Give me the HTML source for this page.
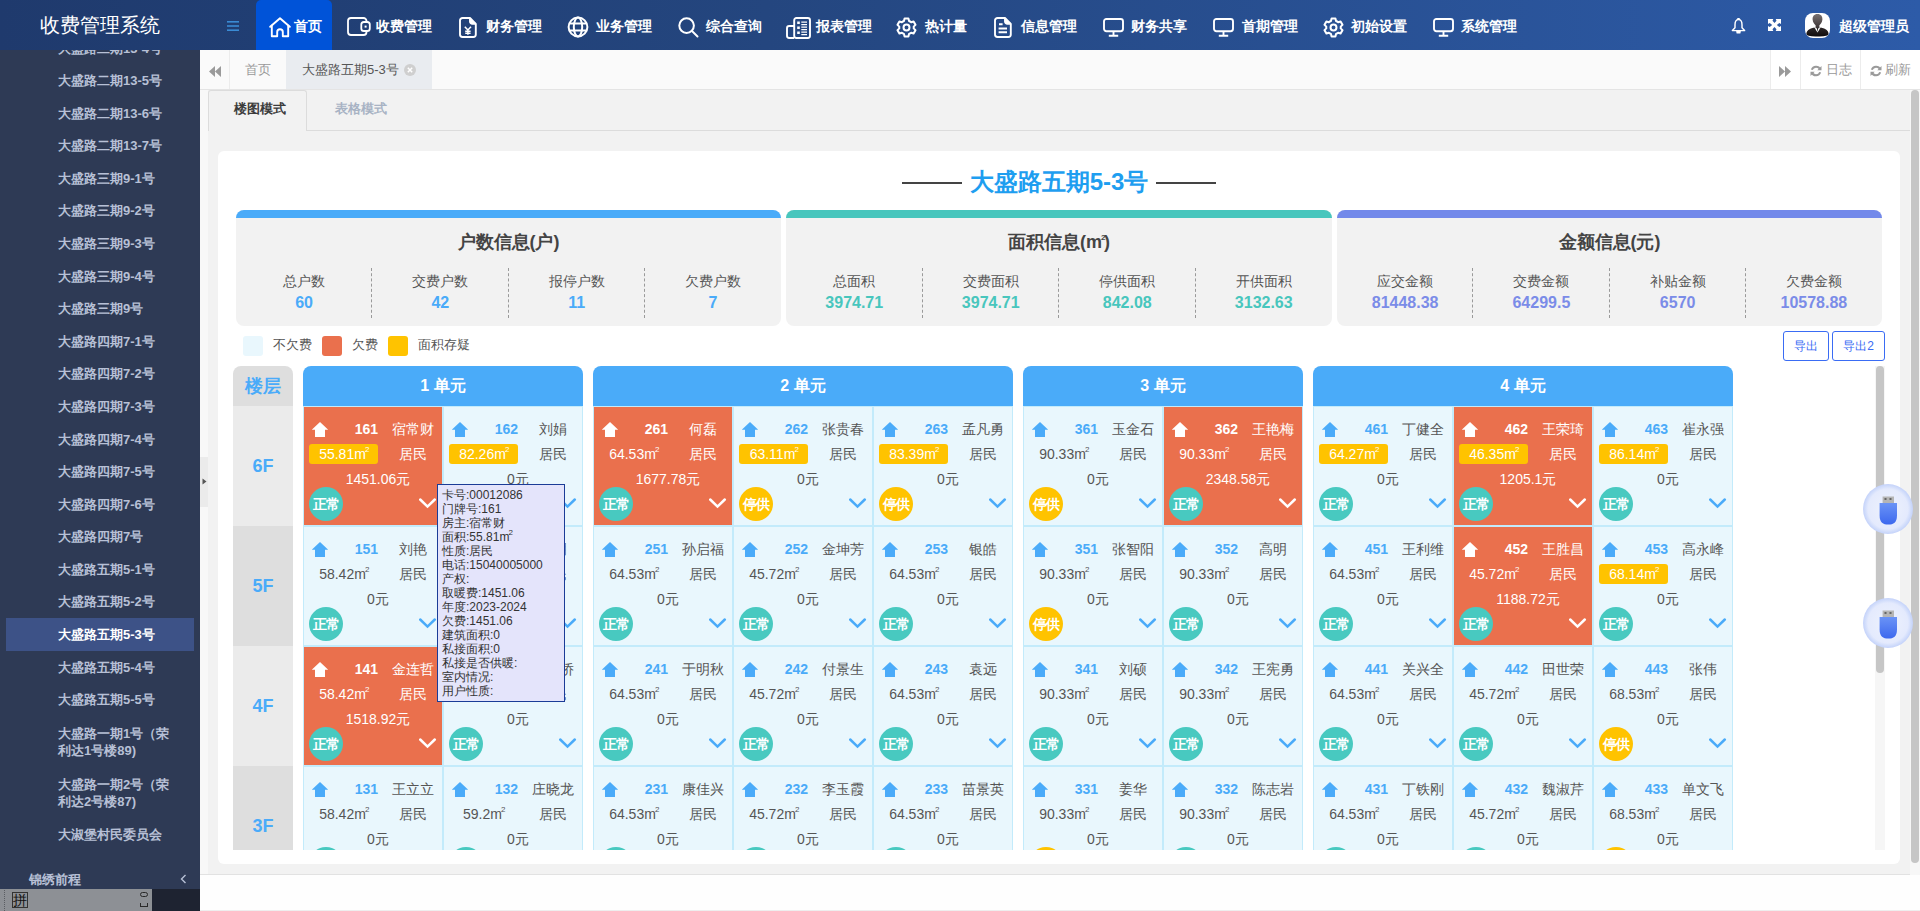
<!DOCTYPE html><html><head><meta charset="utf-8"><style>
*{box-sizing:border-box;margin:0;padding:0}
html,body{width:1920px;height:911px;overflow:hidden;background:#fff}
body{position:relative;font-family:"Liberation Sans",sans-serif;color:#555}
.abs{position:absolute}
.hdr{left:0;top:0;width:1920px;height:50px;background:linear-gradient(90deg,#1f3a6d 0%,#24467f 40%,#2d5ba8 100%)}
.logo{left:0;top:0;width:200px;height:50px;color:#fff;font-size:20px;line-height:50px;text-align:center}
.nav{top:0;height:50px;line-height:52px;color:#fff;font-size:14px;font-weight:bold;white-space:nowrap}
.navbg{left:256px;top:0;width:76px;height:50px;background:#0053d8;border-radius:5px 5px 0 0}
.ico{position:absolute}
.side{left:0;top:50px;width:200px;height:861px;background:#2e3a55;overflow:hidden}
.si{position:absolute;left:58px;font-size:13px;font-weight:bold;color:#b7c0d6;white-space:nowrap;line-height:17px}
.tabbar{left:200px;top:50px;width:1720px;height:40px;background:#fafafa;border-bottom:1px solid #e4e4e4}
.gray{left:200px;top:90px;width:1710px;height:785px;background:#f2f2f2}
.card{left:218px;top:151px;width:1682px;height:713px;background:#fff;border-radius:6px}
.stat{top:210px;height:116px;background:#f2f2f2;border-radius:8px;overflow:hidden}
.stat .bar{position:absolute;left:0;top:0;width:100%;height:8px}
.stat .tt{position:absolute;left:0;top:230px;width:100%;text-align:center;font-size:18px;font-weight:bold;color:#444}
.col{position:absolute;top:0;height:115px;text-align:center}
.col .lb{position:absolute;left:0;width:100%;top:63px;font-size:14px;color:#555;line-height:16px}
.col .vl{position:absolute;left:0;width:100%;top:84px;font-size:16px;font-weight:bold;line-height:18px}
.dash{position:absolute;top:58px;margin-left:-1px;height:50px;width:0;border-left:1px dashed #9a9a9a}
.unit{top:366px;background:#e9f7fd}
.uh{position:absolute;left:0;top:0;width:100%;height:40px;background:#4aabf9;border-radius:8px 8px 0 0;color:#fff;font-size:16px;font-weight:bold;text-align:center;line-height:40px}
.cell{position:absolute;width:140px;height:120px;border:1px solid #c3ebfb;background:#e9f7fd;color:#555;font-size:14px}
.cell.o{background:#ea704d;color:#fff}
.cell .hm{position:absolute;left:8px;top:15px;line-height:0}
.cell .no{position:absolute;left:0;width:74px;text-align:right;top:13.5px;font-weight:bold;color:#4aabf9;line-height:16px}
.cell.o .no{color:#fff}
.cell .nm{position:absolute;left:59px;width:100px;text-align:center;top:14px;line-height:16px;white-space:nowrap}
.cell .ar{position:absolute;left:5px;width:69px;height:20px;top:37px;text-align:center;line-height:20px;white-space:nowrap}
.cell .ar.y{background:#ffc300;border-radius:3px;color:#fff}
.cell .ty{position:absolute;left:59px;width:100px;text-align:center;top:39px;line-height:16px}
.cell .am{position:absolute;left:0;width:148px;text-align:center;top:63.5px;line-height:16px;white-space:nowrap}
.cell .st{position:absolute;left:5px;top:80px;width:34px;height:34px;border-radius:50%;background:#48c9c0;color:#fff;font-weight:bold;font-size:14px;text-align:center;line-height:34px;white-space:nowrap;letter-spacing:-1px}
.cell .st.y{background:#ffc300}
.cell .cv{position:absolute;left:115px;top:89px}
.m2{display:inline-block;position:relative;padding-right:2px;line-height:14px}.m2 i{position:absolute;right:-1.5px;top:-1px;font-style:normal;font-size:8px;line-height:8px}
</style></head><body>
<div class="abs hdr"></div>
<div class="abs logo">收费管理系统</div>
<svg class="abs" style="left:227px;top:20px" width="12" height="12" viewBox="0 0 12 12"><rect x="0" y="1" width="12" height="1.6" fill="#3a8bd5"/><rect x="0" y="5.2" width="12" height="1.6" fill="#3a8bd5"/><rect x="0" y="9.4" width="12" height="1.6" fill="#3a8bd5"/></svg>
<div class="abs navbg"></div>
<div class="abs" style="left:269px;top:17px;line-height:0"><svg width="22" height="21" viewBox="0 0 22 21" fill="none" stroke="#fff" stroke-width="1.9" stroke-linejoin="round" stroke-linecap="round"><path d="M1.2 9.8 L11 1.2 L20.8 9.8"/><path d="M2.8 8.6 V19.2 H8.2 V15 a2.8 2.8 0 0 1 5.6 0 V19.2 H19.2 V8.6"/></svg></div>
<div class="abs nav" style="left:294px">首页</div>
<div class="abs" style="left:347px;top:17px;line-height:0"><svg width="24" height="19" viewBox="0 0 24 19" fill="none" stroke="#fff" stroke-width="1.8"><path d="M19.5 5 V4 a3 3 0 0 0 -3 -3 H4 a3 3 0 0 0 -3 3 V15 a3 3 0 0 0 3 3 H16.5 a3 3 0 0 0 3 -3 V14"/><rect x="14.3" y="5" width="8.5" height="9" rx="2.6"/><rect x="17.6" y="8.6" width="2" height="2" fill="#fff" stroke="none"/></svg></div>
<div class="abs nav" style="left:376px">收费管理</div>
<div class="abs" style="left:459px;top:16.5px;line-height:0"><svg width="18" height="21" viewBox="0 0 18 21" fill="none" stroke="#fff" stroke-width="1.9" stroke-linejoin="round"><path d="M3.5 1 H11 L16.8 6.8 V17.5 a2.5 2.5 0 0 1 -2.5 2.5 H3.5 a2.5 2.5 0 0 1 -2.5 -2.5 V3.5 a2.5 2.5 0 0 1 2.5 -2.5 Z"/><path d="M11 1 V4.5 a2.3 2.3 0 0 0 2.3 2.3 H16.8" fill="#fff"/><path d="M5.8 9.8 L8.9 13 L12 9.8 M8.9 13 V17.8 M6.2 14.2 H11.6 M6.2 16.2 H11.6" stroke-width="1.5"/></svg></div>
<div class="abs nav" style="left:486px">财务管理</div>
<div class="abs" style="left:567px;top:16px;line-height:0"><svg width="22" height="22" viewBox="0 0 22 22" fill="none" stroke="#fff" stroke-width="2"><circle cx="11" cy="11" r="9.4"/><ellipse cx="11" cy="11" rx="4.2" ry="9.4"/><path d="M2 7.6 H20 M2 14.4 H20"/></svg></div>
<div class="abs nav" style="left:596px">业务管理</div>
<div class="abs" style="left:678px;top:17px;line-height:0"><svg width="21" height="21" viewBox="0 0 21 21" fill="none" stroke="#fff" stroke-width="2"><circle cx="8.6" cy="8.6" r="7.3"/><path d="M14 14 L19.5 19.5" stroke-linecap="round"/></svg></div>
<div class="abs nav" style="left:706px">综合查询</div>
<div class="abs" style="left:786px;top:16.5px;line-height:0"><svg width="25" height="22" viewBox="0 0 25 22" fill="none" stroke="#fff" stroke-width="1.9"><rect x="8.2" y="1" width="15.8" height="20" rx="2.2"/><path d="M8.2 9 H3.2 a2.2 2.2 0 0 0 -2.2 2.2 V18.8 a2.2 2.2 0 0 0 2.2 2.2 H8.2"/><path d="M11.2 4.6 h2.6 v2.4 h-2.6 Z M11.2 9.6 h2.6 v2.4 h-2.6 Z M11.2 14.6 h2.6 v2.4 h-2.6 Z" fill="#fff" stroke="none"/><path d="M15.3 5.2 H21 M15.3 7.6 H21 M15.3 10.2 H21 M15.3 12.6 H21 M15.3 15.2 H21 M15.3 17.6 H21" stroke-width="1.2"/></svg></div>
<div class="abs nav" style="left:816px">报表管理</div>
<div class="abs" style="left:896px;top:16.5px;line-height:0"><svg width="21" height="21" viewBox="0 0 24 24" fill="none" stroke="#fff" stroke-width="2.3" stroke-linejoin="round"><path d="M9.8 1.8 H14.2 L14.9 4.6 Q16.2 5.1 17.3 6 L20.1 5.2 L22.3 9 L20.2 11 Q20.4 12 20.2 13 L22.3 15 L20.1 18.8 L17.3 18 Q16.2 18.9 14.9 19.4 L14.2 22.2 H9.8 L9.1 19.4 Q7.8 18.9 6.7 18 L3.9 18.8 L1.7 15 L3.8 13 Q3.6 12 3.8 11 L1.7 9 L3.9 5.2 L6.7 6 Q7.8 5.1 9.1 4.6 Z"/><circle cx="12" cy="12" r="3.4"/></svg></div>
<div class="abs nav" style="left:925px">热计量</div>
<div class="abs" style="left:994px;top:16.5px;line-height:0"><svg width="18" height="21" viewBox="0 0 18 21" fill="none" stroke="#fff" stroke-width="1.9" stroke-linejoin="round"><path d="M3.5 1 H11 L16.8 6.8 V17.5 a2.5 2.5 0 0 1 -2.5 2.5 H3.5 a2.5 2.5 0 0 1 -2.5 -2.5 V3.5 a2.5 2.5 0 0 1 2.5 -2.5 Z"/><path d="M11 1 V4.5 a2.3 2.3 0 0 0 2.3 2.3 H16.8" fill="#fff"/><path d="M5 7.2 H8.6 M4.6 11.4 H13 M4.6 15.2 H13" stroke-width="2"/></svg></div>
<div class="abs nav" style="left:1021px">信息管理</div>
<div class="abs" style="left:1103px;top:18px;line-height:0"><svg width="21" height="19" viewBox="0 0 21 19" fill="none" stroke="#fff" stroke-width="1.9"><rect x="1" y="1" width="19" height="12.2" rx="2.4"/><path d="M10.5 13.2 V17.5 M5.8 17.8 H15.2"/></svg></div>
<div class="abs nav" style="left:1131px">财务共享</div>
<div class="abs" style="left:1213px;top:18px;line-height:0"><svg width="21" height="19" viewBox="0 0 21 19" fill="none" stroke="#fff" stroke-width="1.9"><rect x="1" y="1" width="19" height="12.2" rx="2.4"/><path d="M10.5 13.2 V17.5 M5.8 17.8 H15.2"/></svg></div>
<div class="abs nav" style="left:1242px">首期管理</div>
<div class="abs" style="left:1323px;top:16.5px;line-height:0"><svg width="21" height="21" viewBox="0 0 24 24" fill="none" stroke="#fff" stroke-width="2.3" stroke-linejoin="round"><path d="M9.8 1.8 H14.2 L14.9 4.6 Q16.2 5.1 17.3 6 L20.1 5.2 L22.3 9 L20.2 11 Q20.4 12 20.2 13 L22.3 15 L20.1 18.8 L17.3 18 Q16.2 18.9 14.9 19.4 L14.2 22.2 H9.8 L9.1 19.4 Q7.8 18.9 6.7 18 L3.9 18.8 L1.7 15 L3.8 13 Q3.6 12 3.8 11 L1.7 9 L3.9 5.2 L6.7 6 Q7.8 5.1 9.1 4.6 Z"/><circle cx="12" cy="12" r="3.4"/></svg></div>
<div class="abs nav" style="left:1351px">初始设置</div>
<div class="abs" style="left:1433px;top:18px;line-height:0"><svg width="21" height="19" viewBox="0 0 21 19" fill="none" stroke="#fff" stroke-width="1.9"><rect x="1" y="1" width="19" height="12.2" rx="2.4"/><path d="M10.5 13.2 V17.5 M5.8 17.8 H15.2"/></svg></div>
<div class="abs nav" style="left:1461px">系统管理</div>
<svg class="abs" style="left:1730.5px;top:18px" width="15" height="16" viewBox="0 0 15 16" fill="none" stroke="#fff" stroke-width="1.45" stroke-linejoin="round"><path d="M7.5 1.6 C10.3 1.6 11 4 11 6.8 V9.8 L13.6 12.6 H1.4 L4 9.8 V6.8 C4 4 4.7 1.6 7.5 1.6 Z"/><path d="M6.5 1.2 L7.5 0.3 L8.5 1.2 Z M5.8 12.6 H9.2 L8.8 14.8 H6.2 Z" fill="#fff"/></svg>
<svg class="abs" style="left:1768px;top:19px" width="13" height="12" viewBox="0 0 13 12" fill="#fff"><path d="M0 0 H5.3 L4.5 1.7 L6.5 4.1 L8.5 1.7 L7.7 0 H13 V4.9 L11.3 4.1 L8.8 6 L11.3 7.9 L13 7.1 V12 H7.7 L8.5 10.3 L6.5 7.9 L4.5 10.3 L5.3 12 H0 V7.1 L1.7 7.9 L4.2 6 L1.7 4.1 L0 4.9 Z"/></svg>
<div class="abs" style="left:1805px;top:13px;width:25px;height:25px;border-radius:8px;background:#fff;overflow:hidden"><svg width="25" height="25" viewBox="0 0 25 25"><defs><linearGradient id="av" x1="0" y1="0" x2="0" y2="1"><stop offset="0" stop-color="#7a7272"/><stop offset="1" stop-color="#3a3232"/></linearGradient><linearGradient id="av2" x1="0" y1="0" x2="0" y2="1"><stop offset="0" stop-color="#2e2828"/><stop offset="1" stop-color="#100c0c"/></linearGradient></defs><path d="M12.5 1 C16 1 17.6 3.4 17.4 6.6 C17.2 9.4 15.6 11.4 14.4 12.2 V15.2 H10.6 V12.2 C9.4 11.4 7.8 9.4 7.6 6.6 C7.4 3.4 9 1 12.5 1 Z" fill="url(#av)"/><path d="M1.4 21.6 C1.2 17.6 4 15.6 9.4 14.4 L12.5 19.5 L15.6 14.4 C21 15.6 23.8 17.6 23.6 21.6 Q23.4 23.6 12.5 23.4 Q1.6 23.6 1.4 21.6 Z" fill="url(#av2)"/><path d="M11.8 15 L12.5 19 L13.2 15 Z" fill="#222"/></svg></div>
<div class="abs nav" style="left:1839px">超级管理员</div>
<div class="abs side">
<div class="si" style="top:-10.5px">大盛路二期13-4号</div>
<div class="si" style="top:22.1px">大盛路二期13-5号</div>
<div class="si" style="top:54.7px">大盛路二期13-6号</div>
<div class="si" style="top:87.2px">大盛路二期13-7号</div>
<div class="si" style="top:119.8px">大盛路三期9-1号</div>
<div class="si" style="top:152.4px">大盛路三期9-2号</div>
<div class="si" style="top:185.0px">大盛路三期9-3号</div>
<div class="si" style="top:217.6px">大盛路三期9-4号</div>
<div class="si" style="top:250.1px">大盛路三期9号</div>
<div class="si" style="top:282.7px">大盛路四期7-1号</div>
<div class="si" style="top:315.3px">大盛路四期7-2号</div>
<div class="si" style="top:347.9px">大盛路四期7-3号</div>
<div class="si" style="top:380.5px">大盛路四期7-4号</div>
<div class="si" style="top:413.0px">大盛路四期7-5号</div>
<div class="si" style="top:445.6px">大盛路四期7-6号</div>
<div class="si" style="top:478.2px">大盛路四期7号</div>
<div class="si" style="top:510.8px">大盛路五期5-1号</div>
<div class="si" style="top:543.4px">大盛路五期5-2号</div>
<div class="abs" style="left:6px;top:568.4px;width:188px;height:33px;background:#3d5287"></div>
<div class="si" style="top:575.9px;color:#fff">大盛路五期5-3号</div>
<div class="si" style="top:608.5px">大盛路五期5-4号</div>
<div class="si" style="top:641.1px">大盛路五期5-5号</div>
<div class="si" style="top:674.5px">大盛路一期1号（荣<br>利达1号楼89)</div>
<div class="si" style="top:725.5px">大盛路一期2号（荣<br>利达2号楼87)</div>
<div class="si" style="top:775.5px">大淑堡村民委员会</div>
<div class="si" style="left:29px;top:820.5px;font-size:13px">锦绣前程</div>
<svg class="abs" style="left:180px;top:824px" width="7" height="10" viewBox="0 0 7 10" fill="none" stroke="#b7c0d6" stroke-width="1.4"><path d="M5.5 1 L1.5 5 L5.5 9"/></svg>
</div>
<div class="abs" style="left:0;top:889px;width:152px;height:22px;background:#8d9095"></div>
<div class="abs" style="left:152px;top:889px;width:48px;height:22px;background:#1e2331"></div>
<div class="abs" style="left:4px;top:890px;width:0;height:21px;border-left:1px dotted #5a5d62"></div>
<div class="abs" style="left:12px;top:892px;width:16px;height:16px;border:1px solid #333;font-size:14px;line-height:14px;text-align:center;color:#111">拼</div>
<div class="abs" style="left:140px;top:892px;width:8px;height:5px;border:1.5px solid #2a2a2a;border-radius:3px"></div>
<div class="abs" style="left:140px;top:903px;width:8px;height:4px;border:1.5px solid #2a2a2a;border-top:none"></div>
<div class="abs tabbar"></div>
<div class="abs" style="left:229px;top:50px;width:1px;height:39px;background:#ececec"></div>
<svg class="abs" style="left:209px;top:66px" width="12" height="11" viewBox="0 0 12 11" fill="#9a9a9a"><path d="M6 0 V11 L0 5.5 Z M12 0 V11 L6 5.5 Z"/></svg>
<div class="abs" style="left:245px;top:62px;font-size:13px;color:#999;line-height:16px">首页</div>
<div class="abs" style="left:286px;top:50px;width:146px;height:39px;background:#e9ecf0"></div>
<div class="abs" style="left:302px;top:62px;font-size:13px;color:#555;line-height:16px">大盛路五期5-3号</div>
<svg class="abs" style="left:404px;top:64px" width="12" height="12" viewBox="0 0 12 12"><circle cx="6" cy="6" r="6" fill="#cfcfcf"/><path d="M3.8 3.8 L8.2 8.2 M8.2 3.8 L3.8 8.2" stroke="#fff" stroke-width="1.5"/></svg>
<div class="abs" style="left:1770px;top:50px;width:150px;height:39px;background:#fff"></div>
<div class="abs" style="left:1770px;top:50px;width:1px;height:39px;background:#ececec"></div>
<div class="abs" style="left:1800px;top:50px;width:1px;height:39px;background:#ececec"></div>
<div class="abs" style="left:1860px;top:50px;width:1px;height:39px;background:#ececec"></div>
<svg class="abs" style="left:1779px;top:66px" width="12" height="11" viewBox="0 0 12 11" fill="#9a9a9a"><path d="M0 0 V11 L6 5.5 Z M6 0 V11 L12 5.5 Z"/></svg>
<div class="abs" style="left:1810px;top:65px;line-height:0"><svg width="12" height="12" viewBox="0 0 12 12" fill="none" stroke="#9a9a9a" stroke-width="2"><path d="M10.2 4.5 A4.5 4.5 0 0 0 1.8 4.8"/><path d="M1.8 7.5 A4.5 4.5 0 0 0 10.2 7.2"/><path d="M11.5 1 V5.2 H7.3 Z M0.5 11 V6.8 H4.7 Z" fill="#9a9a9a" stroke="none"/></svg></div>
<div class="abs" style="left:1826px;top:62px;font-size:13px;color:#999;line-height:16px">日志</div>
<div class="abs" style="left:1870px;top:65px;line-height:0"><svg width="12" height="12" viewBox="0 0 12 12" fill="none" stroke="#9a9a9a" stroke-width="2"><path d="M10.2 4.5 A4.5 4.5 0 0 0 1.8 4.8"/><path d="M1.8 7.5 A4.5 4.5 0 0 0 10.2 7.2"/><path d="M11.5 1 V5.2 H7.3 Z M0.5 11 V6.8 H4.7 Z" fill="#9a9a9a" stroke="none"/></svg></div>
<div class="abs" style="left:1885px;top:62px;font-size:13px;color:#999;line-height:16px">刷新</div>
<div class="abs gray"></div>
<div class="abs" style="left:200px;top:90px;width:8px;height:785px;background:#f8f8f8"></div>
<div class="abs" style="left:200px;top:874px;width:1720px;height:1px;background:#e2e2e2"></div>
<div class="abs" style="left:200px;top:875px;width:1720px;height:36px;background:#fefefe"></div>
<div class="abs" style="left:200px;top:910px;width:1720px;height:1px;background:#eeeeee"></div>
<div class="abs" style="left:1910px;top:90px;width:10px;height:785px;background:#f7f7f7"></div>
<div class="abs" style="left:1911px;top:90px;width:8px;height:773px;background:#c6c6c6;border-radius:4px"></div>
<div class="abs" style="left:306px;top:130px;width:1604px;height:1px;background:#dcdcdc"></div>
<div class="abs" style="left:208px;top:90px;width:99px;height:41px;border:1px solid #dcdcdc;border-bottom:none;border-radius:3px 3px 0 0;background:#f2f2f2"></div>
<div class="abs" style="left:234px;top:101px;font-size:13px;font-weight:bold;color:#3c3c3c;line-height:16px">楼图模式</div>
<div class="abs" style="left:335px;top:101px;font-size:13px;font-weight:bold;color:#a8b3c4;line-height:16px">表格模式</div>
<div class="abs card"></div>
<div class="abs" style="left:902px;top:182px;width:60px;height:2px;background:#444"></div>
<div class="abs" style="left:1156px;top:182px;width:60px;height:2px;background:#444"></div>
<div class="abs" style="left:959px;top:168px;width:200px;text-align:center;font-size:24px;font-weight:bold;color:#1e9ef0;line-height:28px">大盛路五期5-3号</div>
<div class="abs stat" style="left:236px;width:545px"><div class="bar" style="background:#4aabf9"></div>
<div style="position:absolute;left:0;top:20px;width:100%;text-align:center;font-size:18px;font-weight:bold;color:#444;line-height:24px">户数信息(户)</div>
<div class="col" style="left:0.00px;width:136.25px"><div class="lb">总户数</div><div class="vl" style="color:#4aabf9">60</div></div>
<div class="col" style="left:136.25px;width:136.25px"><div class="lb">交费户数</div><div class="vl" style="color:#4aabf9">42</div></div>
<div class="dash" style="left:136.25px"></div>
<div class="col" style="left:272.50px;width:136.25px"><div class="lb">报停户数</div><div class="vl" style="color:#4aabf9">11</div></div>
<div class="dash" style="left:272.50px"></div>
<div class="col" style="left:408.75px;width:136.25px"><div class="lb">欠费户数</div><div class="vl" style="color:#4aabf9">7</div></div>
<div class="dash" style="left:408.75px"></div>
</div>
<div class="abs stat" style="left:786px;width:546px"><div class="bar" style="background:#48c6bd"></div>
<div style="position:absolute;left:0;top:20px;width:100%;text-align:center;font-size:18px;font-weight:bold;color:#444;line-height:24px">面积信息(<span class="m2">m<i>2</i></span>)</div>
<div class="col" style="left:0.00px;width:136.50px"><div class="lb">总面积</div><div class="vl" style="color:#48c6bd">3974.71</div></div>
<div class="col" style="left:136.50px;width:136.50px"><div class="lb">交费面积</div><div class="vl" style="color:#48c6bd">3974.71</div></div>
<div class="dash" style="left:136.50px"></div>
<div class="col" style="left:273.00px;width:136.50px"><div class="lb">停供面积</div><div class="vl" style="color:#48c6bd">842.08</div></div>
<div class="dash" style="left:273.00px"></div>
<div class="col" style="left:409.50px;width:136.50px"><div class="lb">开供面积</div><div class="vl" style="color:#48c6bd">3132.63</div></div>
<div class="dash" style="left:409.50px"></div>
</div>
<div class="abs stat" style="left:1337px;width:545px"><div class="bar" style="background:#7389ea"></div>
<div style="position:absolute;left:0;top:20px;width:100%;text-align:center;font-size:18px;font-weight:bold;color:#444;line-height:24px">金额信息(元)</div>
<div class="col" style="left:0.00px;width:136.25px"><div class="lb">应交金额</div><div class="vl" style="color:#7b8ce8">81448.38</div></div>
<div class="col" style="left:136.25px;width:136.25px"><div class="lb">交费金额</div><div class="vl" style="color:#7b8ce8">64299.5</div></div>
<div class="dash" style="left:136.25px"></div>
<div class="col" style="left:272.50px;width:136.25px"><div class="lb">补贴金额</div><div class="vl" style="color:#7b8ce8">6570</div></div>
<div class="dash" style="left:272.50px"></div>
<div class="col" style="left:408.75px;width:136.25px"><div class="lb">欠费金额</div><div class="vl" style="color:#7b8ce8">10578.88</div></div>
<div class="dash" style="left:408.75px"></div>
</div>
<div class="abs" style="left:243px;top:336px;width:20px;height:20px;background:#e9f7fd;border-radius:3px"></div>
<div class="abs" style="left:273px;top:337px;font-size:13px;color:#555;line-height:16px">不欠费</div>
<div class="abs" style="left:322px;top:336px;width:20px;height:20px;background:#ea704d;border-radius:3px"></div>
<div class="abs" style="left:352px;top:337px;font-size:13px;color:#555;line-height:16px">欠费</div>
<div class="abs" style="left:388px;top:336px;width:20px;height:20px;background:#ffc300;border-radius:3px"></div>
<div class="abs" style="left:418px;top:337px;font-size:13px;color:#555;line-height:16px">面积存疑</div>
<div class="abs" style="left:1783px;top:331px;width:46px;height:30px;border:1px solid #3a6cf4;border-radius:3px;color:#3a6cf4;font-size:12px;text-align:center;line-height:28px">导出</div>
<div class="abs" style="left:1832px;top:331px;width:53px;height:30px;border:1px solid #3a6cf4;border-radius:3px;color:#3a6cf4;font-size:12px;text-align:center;line-height:28px">导出2</div>
<div class="abs" style="left:218px;top:366px;width:1682px;height:484px;overflow:hidden">
<div class="abs" style="left:15px;top:0;width:60px;height:40px;background:#dedede;border-radius:8px 8px 0 0;color:#4aabf9;font-size:18px;font-weight:bold;text-align:center;line-height:40px">楼层</div>
<div class="abs" style="left:15px;top:40px;width:60px;height:120px;background:#ebebeb;color:#4aabf9;font-size:18px;font-weight:bold;text-align:center;line-height:120px">6F</div>
<div class="abs" style="left:15px;top:160px;width:60px;height:120px;background:#dedede;color:#4aabf9;font-size:18px;font-weight:bold;text-align:center;line-height:120px">5F</div>
<div class="abs" style="left:15px;top:280px;width:60px;height:120px;background:#ebebeb;color:#4aabf9;font-size:18px;font-weight:bold;text-align:center;line-height:120px">4F</div>
<div class="abs" style="left:15px;top:400px;width:60px;height:120px;background:#dedede;color:#4aabf9;font-size:18px;font-weight:bold;text-align:center;line-height:120px">3F</div>
<div class="abs" style="left:85px;top:0;width:280px;height:40px;background:#4aabf9;border-radius:8px 8px 0 0;color:#fff;font-size:16px;font-weight:bold;text-align:center;line-height:40px">1 单元</div>
<div class="cell o" style="left:85px;top:40px">
<div class="hm"><svg width="17" height="16" viewBox="0 0 17 16"><path d="M8 0 L16.2 7.7 H13 V15 H3 V7.7 H-0.2 Z" fill="#fff"/></svg></div>
<div class="no">161</div><div class="nm">宿常财</div>
<div class="ar y">55.81<span class="m2">m<i>2</i></span></div><div class="ty">居民</div>
<div class="am">1451.06元</div>
<div class="st">正常</div>
<div class="cv"><svg width="18" height="14" viewBox="0 0 18 14" fill="none" stroke="#fff" stroke-width="2.5" stroke-linecap="round"><path d="M1.2 3.5 L8.5 10.6 L15.8 3.5"/></svg></div>
</div>
<div class="cell" style="left:225px;top:40px">
<div class="hm"><svg width="17" height="16" viewBox="0 0 17 16"><path d="M8 0 L16.2 7.7 H13 V15 H3 V7.7 H-0.2 Z" fill="#4aabf9"/></svg></div>
<div class="no">162</div><div class="nm">刘娟</div>
<div class="ar y">82.26<span class="m2">m<i>2</i></span></div><div class="ty">居民</div>
<div class="am">0元</div>
<div class="st">正常</div>
<div class="cv"><svg width="18" height="14" viewBox="0 0 18 14" fill="none" stroke="#4aabf9" stroke-width="2.5" stroke-linecap="round"><path d="M1.2 3.5 L8.5 10.6 L15.8 3.5"/></svg></div>
</div>
<div class="cell" style="left:85px;top:160px">
<div class="hm"><svg width="17" height="16" viewBox="0 0 17 16"><path d="M8 0 L16.2 7.7 H13 V15 H3 V7.7 H-0.2 Z" fill="#4aabf9"/></svg></div>
<div class="no">151</div><div class="nm">刘艳</div>
<div class="ar">58.42<span class="m2">m<i>2</i></span></div><div class="ty">居民</div>
<div class="am">0元</div>
<div class="st">正常</div>
<div class="cv"><svg width="18" height="14" viewBox="0 0 18 14" fill="none" stroke="#4aabf9" stroke-width="2.5" stroke-linecap="round"><path d="M1.2 3.5 L8.5 10.6 L15.8 3.5"/></svg></div>
</div>
<div class="cell" style="left:225px;top:160px">
<div class="hm"><svg width="17" height="16" viewBox="0 0 17 16"><path d="M8 0 L16.2 7.7 H13 V15 H3 V7.7 H-0.2 Z" fill="#4aabf9"/></svg></div>
<div class="no">152</div><div class="nm">刘明</div>
<div class="ar">58.42<span class="m2">m<i>2</i></span></div><div class="ty">居民</div>
<div class="am">0元</div>
<div class="st">正常</div>
<div class="cv"><svg width="18" height="14" viewBox="0 0 18 14" fill="none" stroke="#4aabf9" stroke-width="2.5" stroke-linecap="round"><path d="M1.2 3.5 L8.5 10.6 L15.8 3.5"/></svg></div>
</div>
<div class="cell o" style="left:85px;top:280px">
<div class="hm"><svg width="17" height="16" viewBox="0 0 17 16"><path d="M8 0 L16.2 7.7 H13 V15 H3 V7.7 H-0.2 Z" fill="#fff"/></svg></div>
<div class="no">141</div><div class="nm">金连哲</div>
<div class="ar">58.42<span class="m2">m<i>2</i></span></div><div class="ty">居民</div>
<div class="am">1518.92元</div>
<div class="st">正常</div>
<div class="cv"><svg width="18" height="14" viewBox="0 0 18 14" fill="none" stroke="#fff" stroke-width="2.5" stroke-linecap="round"><path d="M1.2 3.5 L8.5 10.6 L15.8 3.5"/></svg></div>
</div>
<div class="cell" style="left:225px;top:280px">
<div class="hm"><svg width="17" height="16" viewBox="0 0 17 16"><path d="M8 0 L16.2 7.7 H13 V15 H3 V7.7 H-0.2 Z" fill="#4aabf9"/></svg></div>
<div class="no">142</div><div class="nm">王振侨</div>
<div class="ar">58.42<span class="m2">m<i>2</i></span></div><div class="ty">居民</div>
<div class="am">0元</div>
<div class="st">正常</div>
<div class="cv"><svg width="18" height="14" viewBox="0 0 18 14" fill="none" stroke="#4aabf9" stroke-width="2.5" stroke-linecap="round"><path d="M1.2 3.5 L8.5 10.6 L15.8 3.5"/></svg></div>
</div>
<div class="cell" style="left:85px;top:400px">
<div class="hm"><svg width="17" height="16" viewBox="0 0 17 16"><path d="M8 0 L16.2 7.7 H13 V15 H3 V7.7 H-0.2 Z" fill="#4aabf9"/></svg></div>
<div class="no">131</div><div class="nm">王立立</div>
<div class="ar">58.42<span class="m2">m<i>2</i></span></div><div class="ty">居民</div>
<div class="am">0元</div>
<div class="st">正常</div>
<div class="cv"><svg width="18" height="14" viewBox="0 0 18 14" fill="none" stroke="#4aabf9" stroke-width="2.5" stroke-linecap="round"><path d="M1.2 3.5 L8.5 10.6 L15.8 3.5"/></svg></div>
</div>
<div class="cell" style="left:225px;top:400px">
<div class="hm"><svg width="17" height="16" viewBox="0 0 17 16"><path d="M8 0 L16.2 7.7 H13 V15 H3 V7.7 H-0.2 Z" fill="#4aabf9"/></svg></div>
<div class="no">132</div><div class="nm">庄晓龙</div>
<div class="ar">59.2<span class="m2">m<i>2</i></span></div><div class="ty">居民</div>
<div class="am">0元</div>
<div class="st">正常</div>
<div class="cv"><svg width="18" height="14" viewBox="0 0 18 14" fill="none" stroke="#4aabf9" stroke-width="2.5" stroke-linecap="round"><path d="M1.2 3.5 L8.5 10.6 L15.8 3.5"/></svg></div>
</div>
<div class="abs" style="left:375px;top:0;width:420px;height:40px;background:#4aabf9;border-radius:8px 8px 0 0;color:#fff;font-size:16px;font-weight:bold;text-align:center;line-height:40px">2 单元</div>
<div class="cell o" style="left:375px;top:40px">
<div class="hm"><svg width="17" height="16" viewBox="0 0 17 16"><path d="M8 0 L16.2 7.7 H13 V15 H3 V7.7 H-0.2 Z" fill="#fff"/></svg></div>
<div class="no">261</div><div class="nm">何磊</div>
<div class="ar">64.53<span class="m2">m<i>2</i></span></div><div class="ty">居民</div>
<div class="am">1677.78元</div>
<div class="st">正常</div>
<div class="cv"><svg width="18" height="14" viewBox="0 0 18 14" fill="none" stroke="#fff" stroke-width="2.5" stroke-linecap="round"><path d="M1.2 3.5 L8.5 10.6 L15.8 3.5"/></svg></div>
</div>
<div class="cell" style="left:515px;top:40px">
<div class="hm"><svg width="17" height="16" viewBox="0 0 17 16"><path d="M8 0 L16.2 7.7 H13 V15 H3 V7.7 H-0.2 Z" fill="#4aabf9"/></svg></div>
<div class="no">262</div><div class="nm">张贵春</div>
<div class="ar y">63.11<span class="m2">m<i>2</i></span></div><div class="ty">居民</div>
<div class="am">0元</div>
<div class="st y">停供</div>
<div class="cv"><svg width="18" height="14" viewBox="0 0 18 14" fill="none" stroke="#4aabf9" stroke-width="2.5" stroke-linecap="round"><path d="M1.2 3.5 L8.5 10.6 L15.8 3.5"/></svg></div>
</div>
<div class="cell" style="left:655px;top:40px">
<div class="hm"><svg width="17" height="16" viewBox="0 0 17 16"><path d="M8 0 L16.2 7.7 H13 V15 H3 V7.7 H-0.2 Z" fill="#4aabf9"/></svg></div>
<div class="no">263</div><div class="nm">孟凡勇</div>
<div class="ar y">83.39<span class="m2">m<i>2</i></span></div><div class="ty">居民</div>
<div class="am">0元</div>
<div class="st y">停供</div>
<div class="cv"><svg width="18" height="14" viewBox="0 0 18 14" fill="none" stroke="#4aabf9" stroke-width="2.5" stroke-linecap="round"><path d="M1.2 3.5 L8.5 10.6 L15.8 3.5"/></svg></div>
</div>
<div class="cell" style="left:375px;top:160px">
<div class="hm"><svg width="17" height="16" viewBox="0 0 17 16"><path d="M8 0 L16.2 7.7 H13 V15 H3 V7.7 H-0.2 Z" fill="#4aabf9"/></svg></div>
<div class="no">251</div><div class="nm">孙启福</div>
<div class="ar">64.53<span class="m2">m<i>2</i></span></div><div class="ty">居民</div>
<div class="am">0元</div>
<div class="st">正常</div>
<div class="cv"><svg width="18" height="14" viewBox="0 0 18 14" fill="none" stroke="#4aabf9" stroke-width="2.5" stroke-linecap="round"><path d="M1.2 3.5 L8.5 10.6 L15.8 3.5"/></svg></div>
</div>
<div class="cell" style="left:515px;top:160px">
<div class="hm"><svg width="17" height="16" viewBox="0 0 17 16"><path d="M8 0 L16.2 7.7 H13 V15 H3 V7.7 H-0.2 Z" fill="#4aabf9"/></svg></div>
<div class="no">252</div><div class="nm">金坤芳</div>
<div class="ar">45.72<span class="m2">m<i>2</i></span></div><div class="ty">居民</div>
<div class="am">0元</div>
<div class="st">正常</div>
<div class="cv"><svg width="18" height="14" viewBox="0 0 18 14" fill="none" stroke="#4aabf9" stroke-width="2.5" stroke-linecap="round"><path d="M1.2 3.5 L8.5 10.6 L15.8 3.5"/></svg></div>
</div>
<div class="cell" style="left:655px;top:160px">
<div class="hm"><svg width="17" height="16" viewBox="0 0 17 16"><path d="M8 0 L16.2 7.7 H13 V15 H3 V7.7 H-0.2 Z" fill="#4aabf9"/></svg></div>
<div class="no">253</div><div class="nm">银皓</div>
<div class="ar">64.53<span class="m2">m<i>2</i></span></div><div class="ty">居民</div>
<div class="am">0元</div>
<div class="st">正常</div>
<div class="cv"><svg width="18" height="14" viewBox="0 0 18 14" fill="none" stroke="#4aabf9" stroke-width="2.5" stroke-linecap="round"><path d="M1.2 3.5 L8.5 10.6 L15.8 3.5"/></svg></div>
</div>
<div class="cell" style="left:375px;top:280px">
<div class="hm"><svg width="17" height="16" viewBox="0 0 17 16"><path d="M8 0 L16.2 7.7 H13 V15 H3 V7.7 H-0.2 Z" fill="#4aabf9"/></svg></div>
<div class="no">241</div><div class="nm">于明秋</div>
<div class="ar">64.53<span class="m2">m<i>2</i></span></div><div class="ty">居民</div>
<div class="am">0元</div>
<div class="st">正常</div>
<div class="cv"><svg width="18" height="14" viewBox="0 0 18 14" fill="none" stroke="#4aabf9" stroke-width="2.5" stroke-linecap="round"><path d="M1.2 3.5 L8.5 10.6 L15.8 3.5"/></svg></div>
</div>
<div class="cell" style="left:515px;top:280px">
<div class="hm"><svg width="17" height="16" viewBox="0 0 17 16"><path d="M8 0 L16.2 7.7 H13 V15 H3 V7.7 H-0.2 Z" fill="#4aabf9"/></svg></div>
<div class="no">242</div><div class="nm">付景生</div>
<div class="ar">45.72<span class="m2">m<i>2</i></span></div><div class="ty">居民</div>
<div class="am">0元</div>
<div class="st">正常</div>
<div class="cv"><svg width="18" height="14" viewBox="0 0 18 14" fill="none" stroke="#4aabf9" stroke-width="2.5" stroke-linecap="round"><path d="M1.2 3.5 L8.5 10.6 L15.8 3.5"/></svg></div>
</div>
<div class="cell" style="left:655px;top:280px">
<div class="hm"><svg width="17" height="16" viewBox="0 0 17 16"><path d="M8 0 L16.2 7.7 H13 V15 H3 V7.7 H-0.2 Z" fill="#4aabf9"/></svg></div>
<div class="no">243</div><div class="nm">袁远</div>
<div class="ar">64.53<span class="m2">m<i>2</i></span></div><div class="ty">居民</div>
<div class="am">0元</div>
<div class="st">正常</div>
<div class="cv"><svg width="18" height="14" viewBox="0 0 18 14" fill="none" stroke="#4aabf9" stroke-width="2.5" stroke-linecap="round"><path d="M1.2 3.5 L8.5 10.6 L15.8 3.5"/></svg></div>
</div>
<div class="cell" style="left:375px;top:400px">
<div class="hm"><svg width="17" height="16" viewBox="0 0 17 16"><path d="M8 0 L16.2 7.7 H13 V15 H3 V7.7 H-0.2 Z" fill="#4aabf9"/></svg></div>
<div class="no">231</div><div class="nm">康佳兴</div>
<div class="ar">64.53<span class="m2">m<i>2</i></span></div><div class="ty">居民</div>
<div class="am">0元</div>
<div class="st">正常</div>
<div class="cv"><svg width="18" height="14" viewBox="0 0 18 14" fill="none" stroke="#4aabf9" stroke-width="2.5" stroke-linecap="round"><path d="M1.2 3.5 L8.5 10.6 L15.8 3.5"/></svg></div>
</div>
<div class="cell" style="left:515px;top:400px">
<div class="hm"><svg width="17" height="16" viewBox="0 0 17 16"><path d="M8 0 L16.2 7.7 H13 V15 H3 V7.7 H-0.2 Z" fill="#4aabf9"/></svg></div>
<div class="no">232</div><div class="nm">李玉霞</div>
<div class="ar">45.72<span class="m2">m<i>2</i></span></div><div class="ty">居民</div>
<div class="am">0元</div>
<div class="st">正常</div>
<div class="cv"><svg width="18" height="14" viewBox="0 0 18 14" fill="none" stroke="#4aabf9" stroke-width="2.5" stroke-linecap="round"><path d="M1.2 3.5 L8.5 10.6 L15.8 3.5"/></svg></div>
</div>
<div class="cell" style="left:655px;top:400px">
<div class="hm"><svg width="17" height="16" viewBox="0 0 17 16"><path d="M8 0 L16.2 7.7 H13 V15 H3 V7.7 H-0.2 Z" fill="#4aabf9"/></svg></div>
<div class="no">233</div><div class="nm">苗景英</div>
<div class="ar">64.53<span class="m2">m<i>2</i></span></div><div class="ty">居民</div>
<div class="am">0元</div>
<div class="st">正常</div>
<div class="cv"><svg width="18" height="14" viewBox="0 0 18 14" fill="none" stroke="#4aabf9" stroke-width="2.5" stroke-linecap="round"><path d="M1.2 3.5 L8.5 10.6 L15.8 3.5"/></svg></div>
</div>
<div class="abs" style="left:805px;top:0;width:280px;height:40px;background:#4aabf9;border-radius:8px 8px 0 0;color:#fff;font-size:16px;font-weight:bold;text-align:center;line-height:40px">3 单元</div>
<div class="cell" style="left:805px;top:40px">
<div class="hm"><svg width="17" height="16" viewBox="0 0 17 16"><path d="M8 0 L16.2 7.7 H13 V15 H3 V7.7 H-0.2 Z" fill="#4aabf9"/></svg></div>
<div class="no">361</div><div class="nm">玉金石</div>
<div class="ar">90.33<span class="m2">m<i>2</i></span></div><div class="ty">居民</div>
<div class="am">0元</div>
<div class="st y">停供</div>
<div class="cv"><svg width="18" height="14" viewBox="0 0 18 14" fill="none" stroke="#4aabf9" stroke-width="2.5" stroke-linecap="round"><path d="M1.2 3.5 L8.5 10.6 L15.8 3.5"/></svg></div>
</div>
<div class="cell o" style="left:945px;top:40px">
<div class="hm"><svg width="17" height="16" viewBox="0 0 17 16"><path d="M8 0 L16.2 7.7 H13 V15 H3 V7.7 H-0.2 Z" fill="#fff"/></svg></div>
<div class="no">362</div><div class="nm">王艳梅</div>
<div class="ar">90.33<span class="m2">m<i>2</i></span></div><div class="ty">居民</div>
<div class="am">2348.58元</div>
<div class="st">正常</div>
<div class="cv"><svg width="18" height="14" viewBox="0 0 18 14" fill="none" stroke="#fff" stroke-width="2.5" stroke-linecap="round"><path d="M1.2 3.5 L8.5 10.6 L15.8 3.5"/></svg></div>
</div>
<div class="cell" style="left:805px;top:160px">
<div class="hm"><svg width="17" height="16" viewBox="0 0 17 16"><path d="M8 0 L16.2 7.7 H13 V15 H3 V7.7 H-0.2 Z" fill="#4aabf9"/></svg></div>
<div class="no">351</div><div class="nm">张智阳</div>
<div class="ar">90.33<span class="m2">m<i>2</i></span></div><div class="ty">居民</div>
<div class="am">0元</div>
<div class="st y">停供</div>
<div class="cv"><svg width="18" height="14" viewBox="0 0 18 14" fill="none" stroke="#4aabf9" stroke-width="2.5" stroke-linecap="round"><path d="M1.2 3.5 L8.5 10.6 L15.8 3.5"/></svg></div>
</div>
<div class="cell" style="left:945px;top:160px">
<div class="hm"><svg width="17" height="16" viewBox="0 0 17 16"><path d="M8 0 L16.2 7.7 H13 V15 H3 V7.7 H-0.2 Z" fill="#4aabf9"/></svg></div>
<div class="no">352</div><div class="nm">高明</div>
<div class="ar">90.33<span class="m2">m<i>2</i></span></div><div class="ty">居民</div>
<div class="am">0元</div>
<div class="st">正常</div>
<div class="cv"><svg width="18" height="14" viewBox="0 0 18 14" fill="none" stroke="#4aabf9" stroke-width="2.5" stroke-linecap="round"><path d="M1.2 3.5 L8.5 10.6 L15.8 3.5"/></svg></div>
</div>
<div class="cell" style="left:805px;top:280px">
<div class="hm"><svg width="17" height="16" viewBox="0 0 17 16"><path d="M8 0 L16.2 7.7 H13 V15 H3 V7.7 H-0.2 Z" fill="#4aabf9"/></svg></div>
<div class="no">341</div><div class="nm">刘硕</div>
<div class="ar">90.33<span class="m2">m<i>2</i></span></div><div class="ty">居民</div>
<div class="am">0元</div>
<div class="st">正常</div>
<div class="cv"><svg width="18" height="14" viewBox="0 0 18 14" fill="none" stroke="#4aabf9" stroke-width="2.5" stroke-linecap="round"><path d="M1.2 3.5 L8.5 10.6 L15.8 3.5"/></svg></div>
</div>
<div class="cell" style="left:945px;top:280px">
<div class="hm"><svg width="17" height="16" viewBox="0 0 17 16"><path d="M8 0 L16.2 7.7 H13 V15 H3 V7.7 H-0.2 Z" fill="#4aabf9"/></svg></div>
<div class="no">342</div><div class="nm">王宪勇</div>
<div class="ar">90.33<span class="m2">m<i>2</i></span></div><div class="ty">居民</div>
<div class="am">0元</div>
<div class="st">正常</div>
<div class="cv"><svg width="18" height="14" viewBox="0 0 18 14" fill="none" stroke="#4aabf9" stroke-width="2.5" stroke-linecap="round"><path d="M1.2 3.5 L8.5 10.6 L15.8 3.5"/></svg></div>
</div>
<div class="cell" style="left:805px;top:400px">
<div class="hm"><svg width="17" height="16" viewBox="0 0 17 16"><path d="M8 0 L16.2 7.7 H13 V15 H3 V7.7 H-0.2 Z" fill="#4aabf9"/></svg></div>
<div class="no">331</div><div class="nm">姜华</div>
<div class="ar">90.33<span class="m2">m<i>2</i></span></div><div class="ty">居民</div>
<div class="am">0元</div>
<div class="st y">停供</div>
<div class="cv"><svg width="18" height="14" viewBox="0 0 18 14" fill="none" stroke="#4aabf9" stroke-width="2.5" stroke-linecap="round"><path d="M1.2 3.5 L8.5 10.6 L15.8 3.5"/></svg></div>
</div>
<div class="cell" style="left:945px;top:400px">
<div class="hm"><svg width="17" height="16" viewBox="0 0 17 16"><path d="M8 0 L16.2 7.7 H13 V15 H3 V7.7 H-0.2 Z" fill="#4aabf9"/></svg></div>
<div class="no">332</div><div class="nm">陈志岩</div>
<div class="ar">90.33<span class="m2">m<i>2</i></span></div><div class="ty">居民</div>
<div class="am">0元</div>
<div class="st">正常</div>
<div class="cv"><svg width="18" height="14" viewBox="0 0 18 14" fill="none" stroke="#4aabf9" stroke-width="2.5" stroke-linecap="round"><path d="M1.2 3.5 L8.5 10.6 L15.8 3.5"/></svg></div>
</div>
<div class="abs" style="left:1095px;top:0;width:420px;height:40px;background:#4aabf9;border-radius:8px 8px 0 0;color:#fff;font-size:16px;font-weight:bold;text-align:center;line-height:40px">4 单元</div>
<div class="cell" style="left:1095px;top:40px">
<div class="hm"><svg width="17" height="16" viewBox="0 0 17 16"><path d="M8 0 L16.2 7.7 H13 V15 H3 V7.7 H-0.2 Z" fill="#4aabf9"/></svg></div>
<div class="no">461</div><div class="nm">丁健全</div>
<div class="ar y">64.27<span class="m2">m<i>2</i></span></div><div class="ty">居民</div>
<div class="am">0元</div>
<div class="st">正常</div>
<div class="cv"><svg width="18" height="14" viewBox="0 0 18 14" fill="none" stroke="#4aabf9" stroke-width="2.5" stroke-linecap="round"><path d="M1.2 3.5 L8.5 10.6 L15.8 3.5"/></svg></div>
</div>
<div class="cell o" style="left:1235px;top:40px">
<div class="hm"><svg width="17" height="16" viewBox="0 0 17 16"><path d="M8 0 L16.2 7.7 H13 V15 H3 V7.7 H-0.2 Z" fill="#fff"/></svg></div>
<div class="no">462</div><div class="nm">王荣琦</div>
<div class="ar y">46.35<span class="m2">m<i>2</i></span></div><div class="ty">居民</div>
<div class="am">1205.1元</div>
<div class="st">正常</div>
<div class="cv"><svg width="18" height="14" viewBox="0 0 18 14" fill="none" stroke="#fff" stroke-width="2.5" stroke-linecap="round"><path d="M1.2 3.5 L8.5 10.6 L15.8 3.5"/></svg></div>
</div>
<div class="cell" style="left:1375px;top:40px">
<div class="hm"><svg width="17" height="16" viewBox="0 0 17 16"><path d="M8 0 L16.2 7.7 H13 V15 H3 V7.7 H-0.2 Z" fill="#4aabf9"/></svg></div>
<div class="no">463</div><div class="nm">崔永强</div>
<div class="ar y">86.14<span class="m2">m<i>2</i></span></div><div class="ty">居民</div>
<div class="am">0元</div>
<div class="st">正常</div>
<div class="cv"><svg width="18" height="14" viewBox="0 0 18 14" fill="none" stroke="#4aabf9" stroke-width="2.5" stroke-linecap="round"><path d="M1.2 3.5 L8.5 10.6 L15.8 3.5"/></svg></div>
</div>
<div class="cell" style="left:1095px;top:160px">
<div class="hm"><svg width="17" height="16" viewBox="0 0 17 16"><path d="M8 0 L16.2 7.7 H13 V15 H3 V7.7 H-0.2 Z" fill="#4aabf9"/></svg></div>
<div class="no">451</div><div class="nm">王利维</div>
<div class="ar">64.53<span class="m2">m<i>2</i></span></div><div class="ty">居民</div>
<div class="am">0元</div>
<div class="st">正常</div>
<div class="cv"><svg width="18" height="14" viewBox="0 0 18 14" fill="none" stroke="#4aabf9" stroke-width="2.5" stroke-linecap="round"><path d="M1.2 3.5 L8.5 10.6 L15.8 3.5"/></svg></div>
</div>
<div class="cell o" style="left:1235px;top:160px">
<div class="hm"><svg width="17" height="16" viewBox="0 0 17 16"><path d="M8 0 L16.2 7.7 H13 V15 H3 V7.7 H-0.2 Z" fill="#fff"/></svg></div>
<div class="no">452</div><div class="nm">王胜昌</div>
<div class="ar">45.72<span class="m2">m<i>2</i></span></div><div class="ty">居民</div>
<div class="am">1188.72元</div>
<div class="st">正常</div>
<div class="cv"><svg width="18" height="14" viewBox="0 0 18 14" fill="none" stroke="#fff" stroke-width="2.5" stroke-linecap="round"><path d="M1.2 3.5 L8.5 10.6 L15.8 3.5"/></svg></div>
</div>
<div class="cell" style="left:1375px;top:160px">
<div class="hm"><svg width="17" height="16" viewBox="0 0 17 16"><path d="M8 0 L16.2 7.7 H13 V15 H3 V7.7 H-0.2 Z" fill="#4aabf9"/></svg></div>
<div class="no">453</div><div class="nm">高永峰</div>
<div class="ar y">68.14<span class="m2">m<i>2</i></span></div><div class="ty">居民</div>
<div class="am">0元</div>
<div class="st">正常</div>
<div class="cv"><svg width="18" height="14" viewBox="0 0 18 14" fill="none" stroke="#4aabf9" stroke-width="2.5" stroke-linecap="round"><path d="M1.2 3.5 L8.5 10.6 L15.8 3.5"/></svg></div>
</div>
<div class="cell" style="left:1095px;top:280px">
<div class="hm"><svg width="17" height="16" viewBox="0 0 17 16"><path d="M8 0 L16.2 7.7 H13 V15 H3 V7.7 H-0.2 Z" fill="#4aabf9"/></svg></div>
<div class="no">441</div><div class="nm">关兴全</div>
<div class="ar">64.53<span class="m2">m<i>2</i></span></div><div class="ty">居民</div>
<div class="am">0元</div>
<div class="st">正常</div>
<div class="cv"><svg width="18" height="14" viewBox="0 0 18 14" fill="none" stroke="#4aabf9" stroke-width="2.5" stroke-linecap="round"><path d="M1.2 3.5 L8.5 10.6 L15.8 3.5"/></svg></div>
</div>
<div class="cell" style="left:1235px;top:280px">
<div class="hm"><svg width="17" height="16" viewBox="0 0 17 16"><path d="M8 0 L16.2 7.7 H13 V15 H3 V7.7 H-0.2 Z" fill="#4aabf9"/></svg></div>
<div class="no">442</div><div class="nm">田世荣</div>
<div class="ar">45.72<span class="m2">m<i>2</i></span></div><div class="ty">居民</div>
<div class="am">0元</div>
<div class="st">正常</div>
<div class="cv"><svg width="18" height="14" viewBox="0 0 18 14" fill="none" stroke="#4aabf9" stroke-width="2.5" stroke-linecap="round"><path d="M1.2 3.5 L8.5 10.6 L15.8 3.5"/></svg></div>
</div>
<div class="cell" style="left:1375px;top:280px">
<div class="hm"><svg width="17" height="16" viewBox="0 0 17 16"><path d="M8 0 L16.2 7.7 H13 V15 H3 V7.7 H-0.2 Z" fill="#4aabf9"/></svg></div>
<div class="no">443</div><div class="nm">张伟</div>
<div class="ar">68.53<span class="m2">m<i>2</i></span></div><div class="ty">居民</div>
<div class="am">0元</div>
<div class="st y">停供</div>
<div class="cv"><svg width="18" height="14" viewBox="0 0 18 14" fill="none" stroke="#4aabf9" stroke-width="2.5" stroke-linecap="round"><path d="M1.2 3.5 L8.5 10.6 L15.8 3.5"/></svg></div>
</div>
<div class="cell" style="left:1095px;top:400px">
<div class="hm"><svg width="17" height="16" viewBox="0 0 17 16"><path d="M8 0 L16.2 7.7 H13 V15 H3 V7.7 H-0.2 Z" fill="#4aabf9"/></svg></div>
<div class="no">431</div><div class="nm">丁铁刚</div>
<div class="ar">64.53<span class="m2">m<i>2</i></span></div><div class="ty">居民</div>
<div class="am">0元</div>
<div class="st">正常</div>
<div class="cv"><svg width="18" height="14" viewBox="0 0 18 14" fill="none" stroke="#4aabf9" stroke-width="2.5" stroke-linecap="round"><path d="M1.2 3.5 L8.5 10.6 L15.8 3.5"/></svg></div>
</div>
<div class="cell" style="left:1235px;top:400px">
<div class="hm"><svg width="17" height="16" viewBox="0 0 17 16"><path d="M8 0 L16.2 7.7 H13 V15 H3 V7.7 H-0.2 Z" fill="#4aabf9"/></svg></div>
<div class="no">432</div><div class="nm">魏淑芹</div>
<div class="ar">45.72<span class="m2">m<i>2</i></span></div><div class="ty">居民</div>
<div class="am">0元</div>
<div class="st">正常</div>
<div class="cv"><svg width="18" height="14" viewBox="0 0 18 14" fill="none" stroke="#4aabf9" stroke-width="2.5" stroke-linecap="round"><path d="M1.2 3.5 L8.5 10.6 L15.8 3.5"/></svg></div>
</div>
<div class="cell" style="left:1375px;top:400px">
<div class="hm"><svg width="17" height="16" viewBox="0 0 17 16"><path d="M8 0 L16.2 7.7 H13 V15 H3 V7.7 H-0.2 Z" fill="#4aabf9"/></svg></div>
<div class="no">433</div><div class="nm">单文飞</div>
<div class="ar">68.53<span class="m2">m<i>2</i></span></div><div class="ty">居民</div>
<div class="am">0元</div>
<div class="st y">停供</div>
<div class="cv"><svg width="18" height="14" viewBox="0 0 18 14" fill="none" stroke="#4aabf9" stroke-width="2.5" stroke-linecap="round"><path d="M1.2 3.5 L8.5 10.6 L15.8 3.5"/></svg></div>
</div>
<div class="abs" style="left:1657px;top:0;width:10px;height:484px;background:#f6f6f6"></div>
<div class="abs" style="left:1658px;top:0;width:8px;height:307px;background:#c6c6c6;border-radius:4px"></div>
</div>
<div class="abs" style="left:437px;top:484px;width:128px;height:218px;background:#e4e4fb;border:1px solid #1b3c97;padding:3px 0 0 4px;font-size:12px;line-height:14px;color:#333;white-space:nowrap">卡号:00012086<br>门牌号:161<br>房主:宿常财<br>面积:55.81<span class="m2">m<i>2</i></span><br>性质:居民<br>电话:15040005000<br>产权:<br>取暖费:1451.06<br>年度:2023-2024<br>欠费:1451.06<br>建筑面积:0<br>私接面积:0<br>私接是否供暖:<br>室内情况:<br>用户性质:</div>
<div class="abs" style="left:1863px;top:484px;line-height:0"><svg width="50" height="50" viewBox="0 0 50 50"><defs><radialGradient id="ug1" cx="0.5" cy="0.5" r="0.5"><stop offset="0" stop-color="#eef2fd"/><stop offset="0.8" stop-color="#e4eafd"/><stop offset="0.92" stop-color="#d0dcfb"/><stop offset="1" stop-color="#c4d2fa"/></radialGradient><linearGradient id="ub1" x1="0" y1="0" x2="0" y2="1"><stop offset="0" stop-color="#6a93f6"/><stop offset="1" stop-color="#3d68ee"/></linearGradient></defs><circle cx="25" cy="25" r="25" fill="url(#ug1)"/><rect x="19.6" y="12.5" width="11.4" height="6.8" fill="#b5b5b5"/><rect x="21.5" y="14" width="2" height="2" fill="#666"/><rect x="26.5" y="14" width="2" height="2" fill="#666"/><path d="M16.6 19 H34 V31.5 C34 38.5 30.5 40.6 25.3 40.6 C20.1 40.6 16.6 38.5 16.6 31.5 Z" fill="url(#ub1)"/></svg></div>
<div class="abs" style="left:1863px;top:598px;line-height:0"><svg width="50" height="50" viewBox="0 0 50 50"><defs><radialGradient id="ug2" cx="0.5" cy="0.5" r="0.5"><stop offset="0" stop-color="#eef2fd"/><stop offset="0.8" stop-color="#e4eafd"/><stop offset="0.92" stop-color="#d0dcfb"/><stop offset="1" stop-color="#c4d2fa"/></radialGradient><linearGradient id="ub2" x1="0" y1="0" x2="0" y2="1"><stop offset="0" stop-color="#6a93f6"/><stop offset="1" stop-color="#3d68ee"/></linearGradient></defs><circle cx="25" cy="25" r="25" fill="url(#ug2)"/><rect x="19.6" y="12.5" width="11.4" height="6.8" fill="#b5b5b5"/><rect x="21.5" y="14" width="2" height="2" fill="#666"/><rect x="26.5" y="14" width="2" height="2" fill="#666"/><path d="M16.6 19 H34 V31.5 C34 38.5 30.5 40.6 25.3 40.6 C20.1 40.6 16.6 38.5 16.6 31.5 Z" fill="url(#ub2)"/></svg></div>
<div class="abs" style="left:200px;top:457px;width:8px;height:50px;background:#ebebeb"></div>
<svg class="abs" style="left:201.5px;top:478px" width="5" height="7" viewBox="0 0 5 7"><path d="M0.5 0.5 L4.5 3.5 L0.5 6.5 Z" fill="#555"/></svg>
</body></html>
